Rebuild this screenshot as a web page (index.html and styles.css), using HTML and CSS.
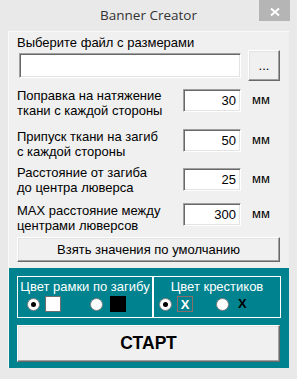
FILE: index.html
```html
<!DOCTYPE html>
<html>
<head>
<meta charset="utf-8">
<link rel="stylesheet" href="styles.css">
</head>
<body>
<div class="window">
  <div class="titlebar">
    <div class="title">Banner Creator</div>
    <div class="close"><svg width="10" height="8" viewBox="0 0 10 8"><path d="M1 0.5 L9 7.5 M9 0.5 L1 7.5" stroke="#fff" stroke-width="2"/></svg></div>
  </div>
  <div class="client">
    <div class="pad">
      <div class="file-label">Выберите файл с размерами</div>
      <div class="file-row">
        <div class="textbox sunken"></div>
        <div class="btn browse">...</div>
      </div>
      <div class="param r1">
        <div class="plabel">Поправка на натяжение<br>ткани с каждой стороны</div>
        <div class="num sunken">30</div>
        <div class="unit">мм</div>
      </div>
      <div class="param r2">
        <div class="plabel">Припуск ткани на загиб<br>с каждой стороны</div>
        <div class="num sunken">50</div>
        <div class="unit">мм</div>
      </div>
      <div class="param r3">
        <div class="plabel">Расстояние от загиба<br>до центра люверса</div>
        <div class="num sunken">25</div>
        <div class="unit">мм</div>
      </div>
      <div class="param r4">
        <div class="plabel">MAX расстояние между<br>центрами люверсов</div>
        <div class="num sunken">300</div>
        <div class="unit">мм</div>
      </div>
      <div class="btn default">Взять значения по умолчанию</div>
    </div>
    <div class="teal">
      <div class="groups">
        <div class="group g-left">
          <div class="gtitle">Цвет рамки по загибу</div>
          <div class="opts">
            <div class="opt"><span class="radio on"></span><span class="swatch sw-white"></span></div>
            <div class="opt"><span class="radio"></span><span class="swatch sw-black wide"></span></div>
          </div>
        </div>
        <div class="group g-right">
          <div class="gtitle">Цвет крестиков</div>
          <div class="opts">
            <div class="opt"><span class="radio on"></span><span class="swatch sw-x">X</span></div>
            <div class="opt"><span class="radio"></span><span class="xblack">X</span></div>
          </div>
        </div>
      </div>
      <div class="btn start">СТАРТ</div>
    </div>
  </div>
</div>
</body>
</html>
```
FILE: styles.css
```css
* { box-sizing: border-box; }
html, body { margin: 0; padding: 0; }
body {
  width: 297px;
  height: 379px;
  background: #e9e9e9;
  font-family: "Liberation Sans", Arial, sans-serif;
  font-size: 13px;
  color: #000;
  overflow: hidden;
}
.titlebar {
  display: grid;
  grid-template-columns: 1fr auto 1fr;
  height: 31px;
}
.title {
  grid-column: 2;
  font-family: "Open Sans", sans-serif;
  font-size: 13.5px;
  line-height: 31px;
  color: #333;
}
.close {
  grid-column: 3;
  justify-self: end;
  align-self: start;
  width: 31px;
  height: 21px;
  margin-right: 7px;
  background: #b5b5b5;
  display: flex;
  align-items: center;
  justify-content: center;
  padding-top: 3px;
}
.close svg { display: block; }
.client {
  margin: 0 8px;
  height: 337px;
  background: #f0f0f0;
  border-left: 1px solid #fafafa;
  border-top: 1px solid #fafafa;
  display: flex;
  flex-direction: column;
}
.pad { padding: 4px 9px 0 8px; }
.file-label { line-height: 14px; }
.file-row {
  display: flex;
  align-items: center;
  height: 31px;
}
.sunken {
  background: #fff;
  border: 1px solid;
  border-color: #a0a0a0 #fff #fff #a0a0a0;
  box-shadow: inset 1px 1px 0 #696969, inset -1px -1px 0 #e3e3e3;
}
.btn {
  background: #f0f0f0;
  border: 1px solid;
  border-color: #fff #696969 #696969 #fff;
  box-shadow: inset -1px -1px 0 #a0a0a0, inset 1px 1px 0 #e3e3e3;
  display: flex;
  align-items: center;
  justify-content: center;
}
.textbox {
  width: 222px;
  height: 25px;
  margin-left: 2px;
}
.browse {
  width: 32px;
  height: 31px;
  margin-left: 7px;
  padding-bottom: 1px;
}
.param {
  display: flex;
  align-items: flex-start;
}
.plabel {
  width: 166px;
  line-height: 15px;
}
.num {
  width: 58px;
  height: 23px;
  text-align: right;
  padding-right: 4px;
  line-height: 21px;
}
.unit {
  margin-left: 11px;
  line-height: 21px;
}
.r1 { margin-top: 7px; }
.r1 .num, .r1 .unit { margin-top: 1px; }
.r2 { margin-top: 11px; }
.r3 { margin-top: 6px; }
.r3 .num, .r3 .unit { margin-top: 3px; }
.r4 { margin-top: 8px; }
.default {
  margin-top: 4px;
  width: 263px;
  height: 25px;
}
.teal {
  margin-top: auto;
  height: 100px;
  background: #00838f;
  padding: 8px 8px 6px 8px;
}
.groups {
  display: flex;
  height: 42px;
}
.group {
  border: 1px solid #fff;
  color: #fff;
}
.g-left { width: 136px; }
.g-right { width: 128px; }
.gtitle {
  text-align: center;
  line-height: 15px;
  margin-top: 2px;
}
.opts {
  display: flex;
  align-items: center;
  height: 16px;
  margin-top: 2px;
}
.g-left .opts { padding-left: 9px; }
.g-right .opts { padding-left: 5px; }
.opt {
  display: flex;
  align-items: center;
  gap: 5px;
}
.g-left .opt { width: 65px; }
.g-right .opt { width: 57px; }
.radio {
  width: 13px;
  height: 13px;
  border-radius: 50%;
  background: #fff;
  border: 1px solid #7d7d7d;
  position: relative;
}
.radio.on::after {
  content: "";
  position: absolute;
  left: 3px;
  top: 3px;
  width: 5px;
  height: 5px;
  border-radius: 50%;
  background: #000;
}
.swatch {
  width: 16px;
  height: 16px;
}
.wide { margin-left: 2px; }
.sw-white { background: #fff; border: 1px solid #6e6e6e; }
.sw-black { background: #000; }
.sw-x {
  border: 1px solid #8a6a6a;
  color: #fff;
  font-weight: bold;
  font-size: 13px;
  text-align: center;
  line-height: 15px;
}
.xblack {
  margin-left: 4px;
  font-weight: bold;
  font-size: 13px;
  line-height: 16px;
  color: #000;
}
.start {
  margin-top: 7px;
  width: 263px;
  height: 37px;
  font-weight: bold;
  font-size: 17.5px;
}
```
